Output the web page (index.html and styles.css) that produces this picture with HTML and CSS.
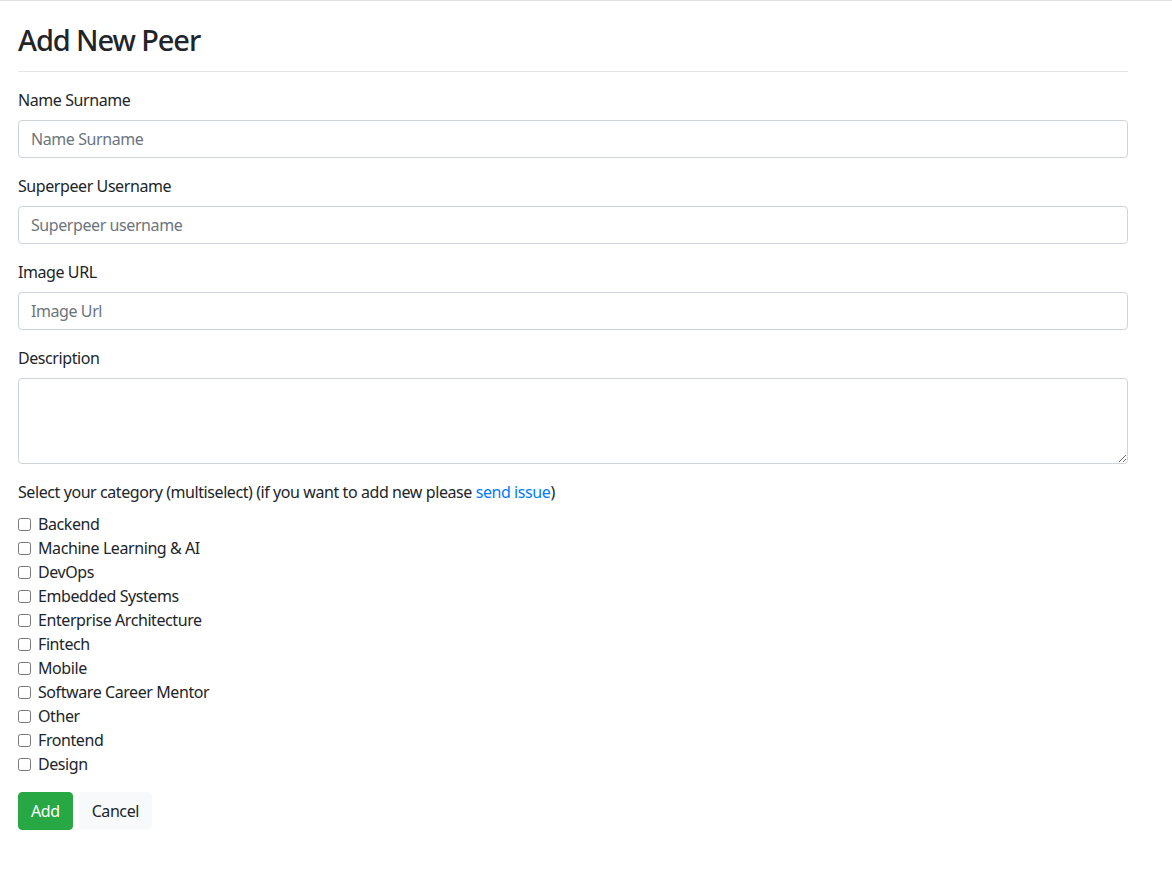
FILE: index.html
```html
<!DOCTYPE html>
<html lang="en">
<head>
<meta charset="utf-8">
<title>Add New Peer</title>
<link rel="stylesheet" href="styles.css">
</head>
<body>
<main class="page">
  <h1 class="title">Add New Peer</h1>
  <hr class="divider">
  <form class="form">
    <div class="group">
      <label class="label" for="name">Name Surname</label>
      <input class="control" id="name" type="text" placeholder="Name Surname">
    </div>
    <div class="group">
      <label class="label" for="user">Superpeer Username</label>
      <input class="control" id="user" type="text" placeholder="Superpeer username">
    </div>
    <div class="group">
      <label class="label" for="img">Image URL</label>
      <input class="control" id="img" type="text" placeholder="Image Url">
    </div>
    <div class="group">
      <label class="label" for="desc">Description</label>
      <textarea class="control area" id="desc"></textarea>
    </div>
    <p class="cat-title">Select your category (multiselect) (if you want to add new please <a href="#" class="link">send issue</a>)</p>
    <div class="checks">
      <label class="check"><input type="checkbox"><span>Backend</span></label>
      <label class="check"><input type="checkbox"><span>Machine Learning &amp; AI</span></label>
      <label class="check"><input type="checkbox"><span>DevOps</span></label>
      <label class="check"><input type="checkbox"><span>Embedded Systems</span></label>
      <label class="check"><input type="checkbox"><span>Enterprise Architecture</span></label>
      <label class="check"><input type="checkbox"><span>Fintech</span></label>
      <label class="check"><input type="checkbox"><span>Mobile</span></label>
      <label class="check"><input type="checkbox"><span>Software Career Mentor</span></label>
      <label class="check"><input type="checkbox"><span>Other</span></label>
      <label class="check"><input type="checkbox"><span>Frontend</span></label>
      <label class="check"><input type="checkbox"><span>Design</span></label>
    </div>
    <div class="actions">
      <button type="button" class="btn btn-add">Add</button>
      <button type="button" class="btn btn-cancel">Cancel</button>
    </div>
  </form>
</main>
</body>
</html>
```
FILE: styles.css
```css
* { box-sizing: border-box; }
html, body { margin: 0; padding: 0; }
body {
  font-family: "Noto Sans", "Open Sans", sans-serif;
  font-size: 16px;
  line-height: 1.5;
  letter-spacing: -0.42px;
  color: #212529;
  background: #fff;
  border-top: 1px solid #dee2e6;
}
.page {
  width: 1110px;
  margin-left: 18px;
  padding-top: 19px;
}
.title {
  margin: 0;
  font-size: 29px;
  font-weight: 500;
  line-height: 40px;
  letter-spacing: -1.1px;
  color: #212529;
}
.divider {
  margin: 11px 0 0;
  border: 0;
  border-top: 1px solid #e5e5e5;
}
.form { padding-top: 16px; }
.group { margin-bottom: 16px; }
.label {
  display: block;
  margin-bottom: 8px;
}
.control {
  display: block;
  width: 100%;
  height: 38px;
  padding: 6px 12px;
  font: inherit;
  letter-spacing: -0.42px;
  color: #495057;
  border: 1px solid #ced4da;
  border-radius: 4px;
  background: #fff;
}
.control::placeholder { color: #6c757d; }
.area { height: 86px; resize: vertical; }
.cat-title { margin: 0 0 8px; }
.link { color: #007bff; text-decoration: none; }
.checks { display: flex; flex-direction: column; }
.check {
  display: flex;
  align-items: center;
  height: 24px;
}
.check input {
  margin: 0 7px 0 0;
  width: 13px;
  height: 13px;
}
.actions {
  display: flex;
  gap: 6px;
  margin-top: 16px;
}
.btn {
  font: inherit;
  letter-spacing: -0.42px;
  height: 38px;
  padding: 6px 12px;
  border-radius: 4px;
  border: 1px solid transparent;
  cursor: pointer;
}
.btn-add { background: #28a745; border-color: #28a745; color: #fff; }
.btn-cancel { background: #f8f9fa; border-color: #f8f9fa; color: #212529; }
```
